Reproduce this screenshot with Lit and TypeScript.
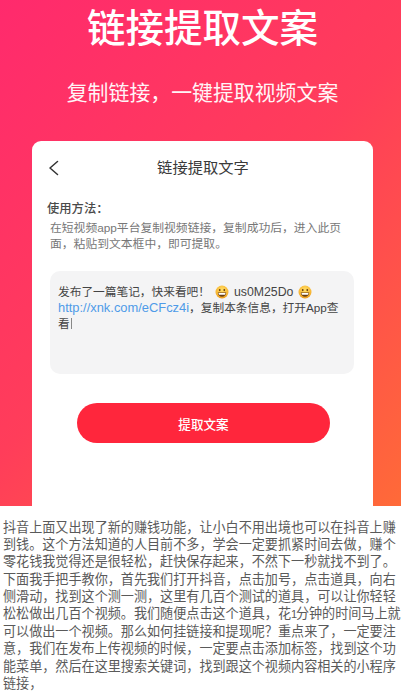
import { LitElement, html, css } from "lit";
import { customElement } from "lit/decorators.js";

const emoji = html`<svg class="emoji" viewBox="0 0 16 16" aria-hidden="true">
  <defs><radialGradient id="eg" cx="50%" cy="35%" r="70%"><stop offset="0" stop-color="#ffe06a"/><stop offset="0.7" stop-color="#f8b632"/><stop offset="1" stop-color="#e48a12"/></radialGradient></defs>
  <circle cx="8" cy="8" r="7.4" fill="url(#eg)"/>
  <ellipse cx="5.4" cy="5.8" rx="1" ry="1.2" fill="#6b3d10"/>
  <ellipse cx="10.6" cy="5.8" rx="1" ry="1.2" fill="#6b3d10"/>
  <path d="M3.2 8.6h9.6c0 3-2 4.8-4.8 4.8s-4.8-1.8-4.8-4.8z" fill="#6b3d10"/>
  <path d="M4 9.1h8c-.1 1-.3 1.6-.6 2.1H4.6C4.300 10.700 4.100 10.100 4 9.100z" fill="#fff"/>
</svg>`;

@customElement("app-root")
export class AppRoot extends LitElement {
  static styles = css`
    :host {
      display: block;
      width: 401px;
      height: 696px;
      overflow: hidden;
      background: #fff;
      font-family: "Liberation Sans", "Noto Sans CJK SC", sans-serif;
    }
    .hero {
      height: 506px;
      box-sizing: border-box;
      padding: 5px 0 0 4px;
      display: flex;
      flex-direction: column;
      align-items: center;
      background: linear-gradient(135deg, #ff2a6d 0%, #ff3d5a 50%, #ff6a38 100%);
      color: #fff;
    }
    h1 {
      margin: 0;
      font-size: 38.500px;
      line-height: 48px;
      font-weight: 500;
      white-space: nowrap;
    }
    .sub {
      margin: 25px 0 0;
      font-size: 20.900px;
      line-height: 30px;
      font-weight: 400;
      white-space: nowrap;
      opacity: 0.95;
    }
    .card {
      margin-top: 33px;
      width: 341px;
      flex: 1;
      box-sizing: border-box;
      background: #fff;
      border-radius: 9px 9px 0 0;
      padding: 13px 16px 0 17px;
      color: #333;
    }
    .nav {
      position: relative;
      display: flex;
      justify-content: center;
      align-items: center;
      height: 24px;
      font-size: 15.300px;
      color: #3a3a3a;
    }
    .back {
      position: absolute;
      left: 0;
      top: 5px;
      width: 12px;
      height: 18px;
    }
    .how {
      margin: 22px 0 0 -2px;
      font-size: 12.300px;
      line-height: 18px;
      font-weight: 500;
      color: #4a4a4a;
    }
    .desc {
      margin: 2px 0 0 1px;
      width: 295px;
      font-size: 11.800px;
      line-height: 16px;
      color: #777;
    }
    .input {
      margin-top: 19px;
      margin-left: 1px;
      width: 304px;
      height: 103px;
      box-sizing: border-box;
      background: #f4f4f5;
      border-radius: 10px;
      padding: 13px 8px 0;
      font-size: 11.700px;
      line-height: 16px;
      color: #444;
    }
    .emoji {
      width: 14px;
      height: 14px;
      vertical-align: -2.500px;
      margin: 0 5px;
    }
    .code { font-size: 12.300px; }
    .link { color: #4f9be8; font-size: 12.900px; }
    .caret {
      display: inline-block;
      width: 1px;
      height: 11px;
      margin-left: 1px;
      vertical-align: -1px;
      background: #888;
    }
    .btn {
      display: flex;
      align-items: center;
      justify-content: center;
      margin: 29px 0 0 28px;
      width: 253px;
      height: 40px;
      border: 0;
      padding: 0;
      border-radius: 20px;
      background: #ff263c;
      color: #fff;
      font: inherit;
      font-size: 12.600px;
      font-weight: 500;
    }
    .article {
      margin: 0;
      padding: 13px 0 0 3px;
      width: 401px;
      box-sizing: border-box;
      font-size: 13.100px;
      line-height: 17.200px;
      color: #5a5a5a;
    }
    .num { font-size: 11px; letter-spacing: -1.300px; }
  `;

  render() {
    return html`
      <section class="hero">
        <h1>链接提取文案</h1>
        <p class="sub">复制链接，一键提取视频文案</p>
        <div class="card">
          <div class="nav">
            <svg class="back" viewBox="0 0 12 18" fill="none" stroke="#333" stroke-width="1.500" stroke-linecap="round" stroke-linejoin="round"><path d="M8.500 2.500 1 9l7.500 6.500"/></svg>
            链接提取文字
          </div>
          <div class="how">使用方法：</div>
          <div class="desc">在短视频app平台复制视频链接，复制成功后，进入此页面，粘贴到文本框中，即可提取。</div>
          <div class="input">发布了一篇笔记，快来看吧！${emoji}<span class="code">us0M25Do</span>${emoji}<br /><span class="link">http://xnk.com/eCFcz4i</span>，复制本条信息，打开App查看<span class="caret"></span></div>
          <button class="btn">提取文案</button>
        </div>
      </section>
      <p class="article">抖音上面又出现了新的赚钱功能，让小白不用出境也可以在抖音上赚到钱。这个方法知道的人目前不多，学会一定要抓紧时间去做，赚个零花钱我觉得还是很轻松，赶快保存起来，不然下一秒就找不到了。下面我手把手教你，首先我们打开抖音，点击加号，点击道具，向右侧滑动，找到这个测一测，这里有几百个测试的道具，可以让你轻轻松松做出几百个视频。我们随便点击这个道具，花<span class="num">1</span>分钟的时间马上就可以做出一个视频。那么如何挂链接和提现呢？重点来了，一定要注意，我们在发布上传视频的时候，一定要点击添加标签，找到这个功能菜单，然后在这里搜索关键词，找到跟这个视频内容相关的小程序链接，</p>
    `;
  }
}
